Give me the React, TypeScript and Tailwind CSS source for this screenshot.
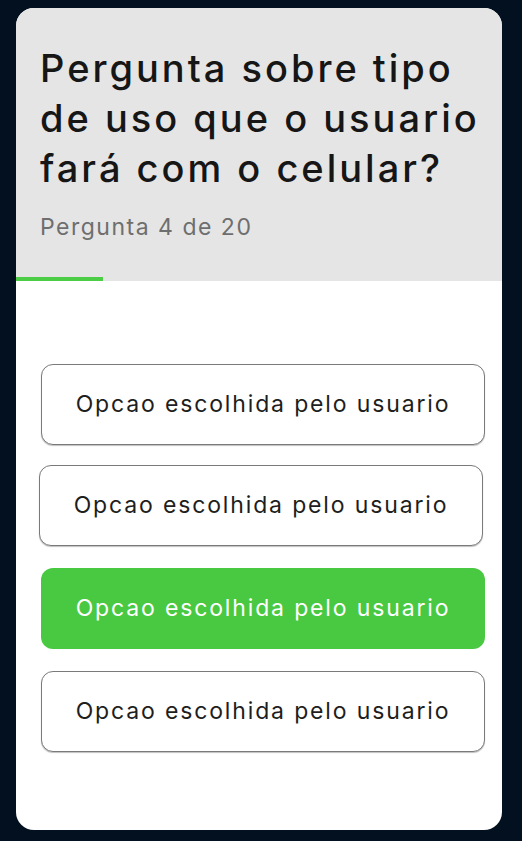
import React from "react";

const options = [
  { label: "Opcao escolhida pelo usuario", selected: false, cls: "ml-[25px]" },
  { label: "Opcao escolhida pelo usuario", selected: false, cls: "ml-[23px] mt-[20px]" },
  { label: "Opcao escolhida pelo usuario", selected: true, cls: "ml-[25px] mt-[22px]" },
  { label: "Opcao escolhida pelo usuario", selected: false, cls: "ml-[25px] mt-[22px]" },
];

export default function App() {
  return (
    <div
      className="min-h-[841px] w-full bg-[#03101f] pt-[8px] px-[16px]"
      style={{ fontFamily: "Inter, 'Open Sans', sans-serif" }}
    >
      <div className="w-[486px] h-[822px] bg-white rounded-[18px] overflow-hidden flex flex-col">
        <div className="bg-[#e5e5e5] h-[273px] flex flex-col">
          <div className="pl-[24px] pt-[35px] flex-1">
            <h1 className="text-[38px] leading-[50px] text-[#161616] font-medium tracking-[3px] whitespace-nowrap">
              <span className="block">Pergunta sobre tipo</span>
              <span className="block">de uso que o usuario</span>
              <span className="block">fará com o celular?</span>
            </h1>
            <p className="mt-[22px] text-[23px] leading-[24px] text-[#6e6e6e] tracking-[1.5px]">
              Pergunta 4 de 20
            </p>
          </div>
          <div className="h-[4px] w-[87px] bg-[#4bcd46]" />
        </div>
        <div className="pt-[83px] flex flex-col">
          {options.map((o, i) => (
            <button
              key={i}
              className={
                "w-[444px] h-[81px] rounded-[12px] flex items-center justify-center text-[23px] tracking-[1.85px] " +
                o.cls +
                (o.selected
                  ? " bg-[#48c941] text-white"
                  : " bg-white text-[#1e1e1e] border border-[#7a7a7a] shadow-[0_1px_1px_rgba(0,0,0,0.25)]")
              }
            >
              {o.label}
            </button>
          ))}
        </div>
      </div>
    </div>
  );
}
